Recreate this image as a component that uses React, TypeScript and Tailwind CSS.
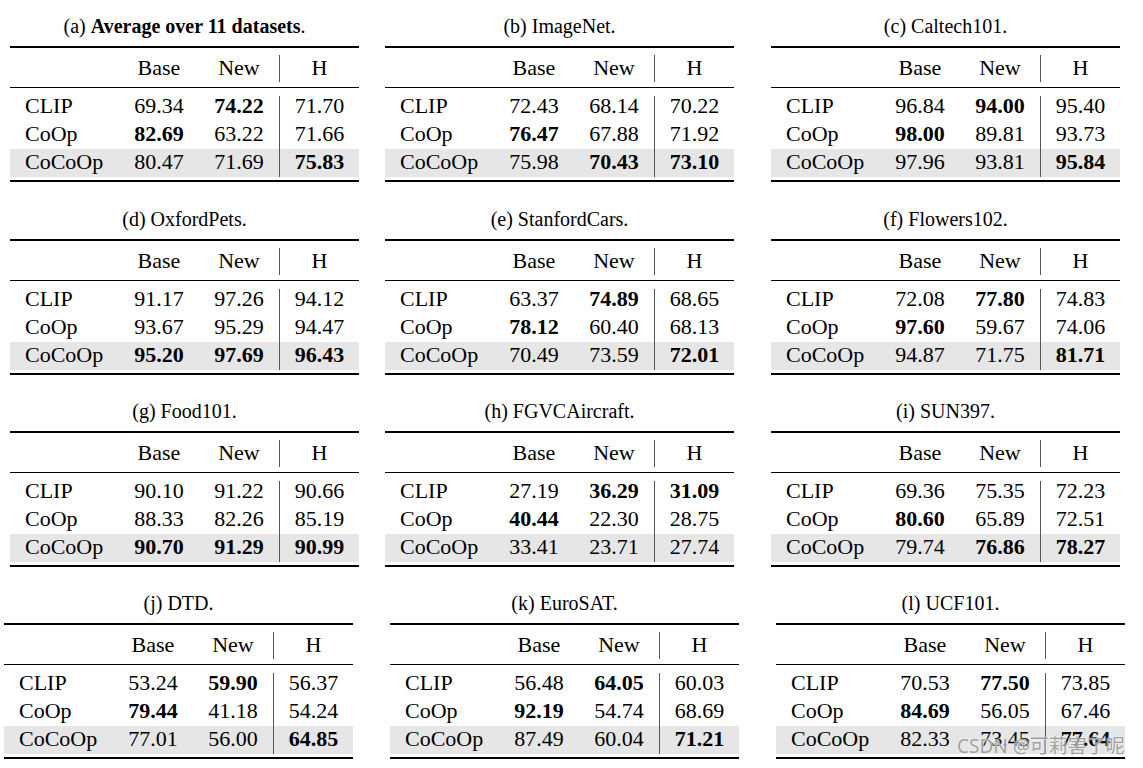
import React from "react";

type Table = {
  tag: string;
  name: string;
  rows: string[][];
};

// "*" in front of a value means bold
const tables: Table[] = [
  { tag: "a", name: "", rows: [["69.34", "*74.22", "71.70"], ["*82.69", "63.22", "71.66"], ["80.47", "71.69", "*75.83"]] },
  { tag: "b", name: "ImageNet", rows: [["72.43", "68.14", "70.22"], ["*76.47", "67.88", "71.92"], ["75.98", "*70.43", "*73.10"]] },
  { tag: "c", name: "Caltech101", rows: [["96.84", "*94.00", "95.40"], ["*98.00", "89.81", "93.73"], ["97.96", "93.81", "*95.84"]] },
  { tag: "d", name: "OxfordPets", rows: [["91.17", "97.26", "94.12"], ["93.67", "95.29", "94.47"], ["*95.20", "*97.69", "*96.43"]] },
  { tag: "e", name: "StanfordCars", rows: [["63.37", "*74.89", "68.65"], ["*78.12", "60.40", "68.13"], ["70.49", "73.59", "*72.01"]] },
  { tag: "f", name: "Flowers102", rows: [["72.08", "*77.80", "74.83"], ["*97.60", "59.67", "74.06"], ["94.87", "71.75", "*81.71"]] },
  { tag: "g", name: "Food101", rows: [["90.10", "91.22", "90.66"], ["88.33", "82.26", "85.19"], ["*90.70", "*91.29", "*90.99"]] },
  { tag: "h", name: "FGVCAircraft", rows: [["27.19", "*36.29", "*31.09"], ["*40.44", "22.30", "28.75"], ["33.41", "23.71", "27.74"]] },
  { tag: "i", name: "SUN397", rows: [["69.36", "75.35", "72.23"], ["*80.60", "65.89", "72.51"], ["79.74", "*76.86", "*78.27"]] },
  { tag: "j", name: "DTD", rows: [["53.24", "*59.90", "56.37"], ["*79.44", "41.18", "54.24"], ["77.01", "56.00", "*64.85"]] },
  { tag: "k", name: "EuroSAT", rows: [["56.48", "*64.05", "60.03"], ["*92.19", "54.74", "68.69"], ["87.49", "60.04", "*71.21"]] },
  { tag: "l", name: "UCF101", rows: [["70.53", "*77.50", "73.85"], ["*84.69", "56.05", "67.46"], ["82.33", "73.45", "*77.64"]] },
];

const methods = ["CLIP", "CoOp", "CoCoOp"];

const rowLayout = [
  { height: "h-[193px]", margins: ["ml-[10px]", "ml-[26px]", "ml-[37px]"] },
  { height: "h-[192px]", margins: ["ml-[10px]", "ml-[26px]", "ml-[37px]"] },
  { height: "h-[192px]", margins: ["ml-[10px]", "ml-[26px]", "ml-[37px]"] },
  { height: "h-[191px]", margins: ["ml-[4px]", "ml-[37px]", "ml-[37px]"] },
];

const Cell = ({ value }: { value: string }) => {
  const bold = value.startsWith("*");
  return (
    <div className={`h-[28px] leading-[26px] text-center whitespace-nowrap ${bold ? "font-bold" : ""}`}>
      {bold ? value.slice(1) : value}
    </div>
  );
};

const ResultTable = ({ table, margin }: { table: Table; margin: string }) => (
  <div className={`w-[349px] shrink-0 ${margin}`}>
    {/* Caption */}
    <div className="mt-[16px] h-[20px] text-center text-[20px] leading-[20px] whitespace-nowrap">
      {table.tag === "a" ? (
        <>
          (a) <span className="font-bold">Average over 11 datasets</span>.
        </>
      ) : (
        `(${table.tag}) ${table.name}.`
      )}
    </div>

    <div className="mt-[10px] h-[2px] bg-black" />

    {/* Header */}
    <div className="grid h-[39px] grid-cols-[109px_80px_80px_1px_79px] text-[22px] leading-[39px]">
      <div />
      <div className="text-center">Base</div>
      <div className="text-center">New</div>
      <div className="mt-[7px] mb-[5px] bg-[#555]" />
      <div className="text-center">H</div>
    </div>

    <div className="h-px bg-black" />
    <div className="h-[5px]" />

    {/* Body */}
    <div className="text-[22px]">
      {table.rows.map((row, i) => (
        <div
          key={methods[i]}
          className={`grid grid-cols-[109px_80px_80px_1px_79px] ${i === 2 ? "bg-[#e6e6e6]" : ""}`}
        >
          <div className="h-[28px] pl-[15px] leading-[26px]">{methods[i]}</div>
          <Cell value={row[0]} />
          <Cell value={row[1]} />
          <div className={`bg-[#555] ${i === 0 ? "mt-[3px]" : ""}`} />
          <Cell value={row[2]} />
        </div>
      ))}
    </div>

    <div className="h-[3px]" />
    <div className="h-[2px] bg-black" />
  </div>
);

export default function App() {
  return (
    <div className="relative h-[768px] w-[1143px] overflow-hidden bg-white font-['Liberation_Serif','Times_New_Roman',serif] text-black">
      {rowLayout.map((layout, r) => (
        <div key={r} className={`flex ${layout.height}`}>
          {tables.slice(r * 3, r * 3 + 3).map((t, c) => (
            <ResultTable key={t.tag} table={t} margin={layout.margins[c]} />
          ))}
        </div>
      ))}

      {/* Watermark */}
      <div className="absolute left-[957px] top-[735px] whitespace-nowrap font-['Noto_Sans','Noto_Sans_CJK_SC',sans-serif] text-[19px] leading-[22px] text-[#a0a0a0] [text-shadow:0_0_2px_#ffffff]">
        CSDN @可莉害了呢
      </div>
    </div>
  );
}
